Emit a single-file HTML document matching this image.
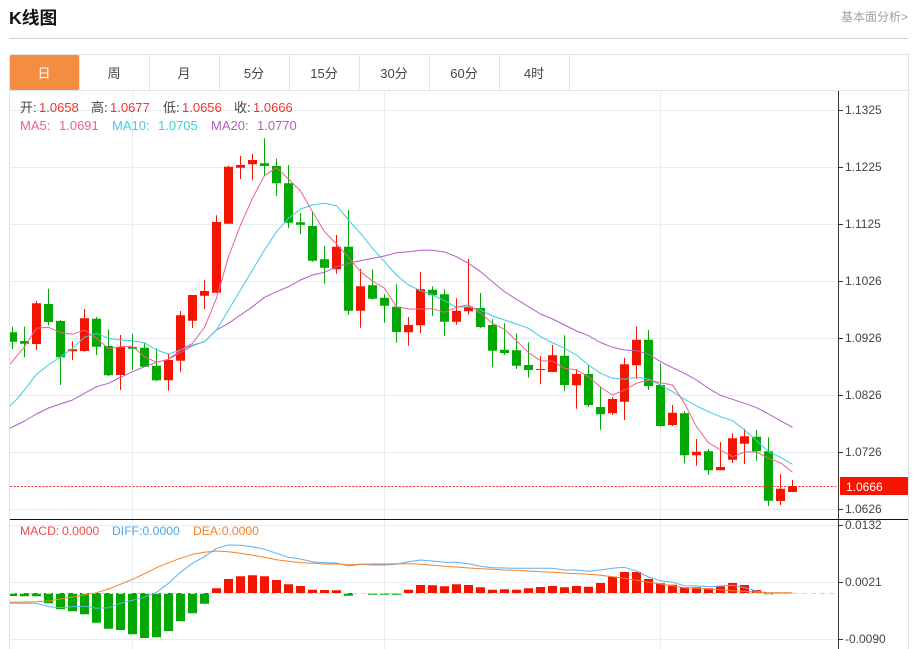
<!DOCTYPE html>
<html><head><meta charset="utf-8"><title>K线图</title>
<style>
html,body{margin:0;padding:0;background:#fff}
body{width:916px;height:649px;overflow:hidden;position:relative;font-family:"Liberation Sans","Noto Sans CJK SC",sans-serif}
svg{position:absolute;left:0;top:0}
svg text{font-family:"Liberation Sans","Noto Sans CJK SC",sans-serif}
</style></head><body>
<svg width="916" height="649" viewBox="0 0 916 649">
<defs><clipPath id="c"><rect x="10" y="91" width="828" height="558"/></clipPath></defs>
<text x="9" y="24" font-size="17.7" font-weight="700" fill="#111">K线图</text>
<text x="841" y="21" font-size="12" fill="#a0a0a0">基本面分析&gt;</text>
<path d="M9 38.5H908" stroke="#d0d0d0" fill="none"/>
<!-- frame and tabs -->
<path d="M9.5 649V54.5H908.5V649" stroke="#dfe4e8" fill="none"/>
<path d="M9.5 90.5H908.5M79.5 55V90M149.5 55V90M219.5 55V90M289.5 55V90M359.5 55V90M429.5 55V90M499.5 55V90M569.5 55V90" stroke="#dfe4e8" fill="none"/>
<rect x="10" y="55" width="69" height="35" rx="1.5" fill="#f48d42"/>
<g font-size="13" text-anchor="middle" fill="#444">
<text x="44" y="78" fill="#fff">日</text><text x="114" y="78">周</text><text x="184" y="78">月</text><text x="254" y="78">5分</text><text x="324" y="78">15分</text><text x="394" y="78">30分</text><text x="464" y="78">60分</text><text x="534" y="78">4时</text>
</g>
<!-- grid -->
<path d="M10 110.5H838M10 167.5H838M10 224.5H838M10 281.5H838M10 338.5H838M10 395.5H838M10 452.5H838M10 509.5H838M10 525.5H838M10 582.5H838M10 639.5H838M132.5 91V519M384.5 91V519M660.5 91V519M132.5 520V649M384.5 520V649M660.5 520V649" stroke="#e3edf3" fill="none"/>
<g clip-path="url(#c)" fill="none">
<!-- candles green -->
<path stroke="#03a803" d="M12.5 326.7V349M24.5 326.7V357.3M48.5 288.7V325.3M60.5 320V385M96.5 317V355M108.5 329.3V376M132.5 333.7V370M144.5 343.3V367.3M156.5 348.3V381M264.5 138.3V176M276.5 158.7V196M288.5 165V228M300.5 213V234M312.5 212V261.7M324.5 246V283.7M348.5 210V315M372.5 269.3V299.7M384.5 294.3V322.7M396.5 284.3V342.7M432.5 286.3V315.7M444.5 289.3V336M480.5 293V328M492.5 319V367.3M504.5 323.3V355M516.5 333.3V369M528.5 342.3V377.7M564.5 335.3V391.3M588.5 365V407M600.5 387.3V429.7M648.5 330V390M660.5 363.3V426.7M684.5 411.3V463.3M708.5 449V475M756.5 430V460.7M768.5 437.3V506"/>
<path stroke="#03a803" stroke-width="9" d="M12.5 332.3V341.7M24.5 341V343.7M48.5 304V322M60.5 321V357.3M96.5 318.7V346.7M108.5 346V375.3M132.5 347V348.7M144.5 347.7V366.7M156.5 365.7V380.3M264.5 163.3V166M276.5 166V183.3M288.5 183.3V222.7M300.5 222.3V224.9M312.5 226V260.7M324.5 259.3V267.7M348.5 246.7V310.7M372.5 285.3V298.7M384.5 297.7V305.7M396.5 306.7V332M432.5 289.7V295.3M444.5 294.3V321.7M480.5 308V327M492.5 325V350.7M504.5 349.7V353M516.5 350.3V365.7M528.5 365V370M564.5 355.7V385M588.5 374V405M600.5 407V414.3M648.5 339.7V386M660.5 385V426M684.5 413.3V455.3M708.5 451.3V470.3M756.5 436.7V451.3M768.5 451.3V500.7"/>
<!-- candles red -->
<path stroke="#f41500" d="M36.5 301V350M72.5 341.3V360M84.5 309V351.7M120.5 335V390M168.5 354V390.7M180.5 311V371.7M192.5 295V328M204.5 280V309M216.5 215.3V293.3M228.5 165.7V224M240.5 156V179M252.5 153.7V179.7M336.5 235V273.7M360.5 269V327.7M408.5 317V345.7M420.5 272V333M456.5 298.3V324.7M468.5 259V314.7M540.5 356.3V384.3M552.5 345V372M576.5 369V408.7M612.5 397.3V415M624.5 357.7V420M636.5 326.7V378.7M672.5 405V426M696.5 439V465.7M720.5 442V470.3M732.5 433.3V463M744.5 428.7V464M780.5 474V505M792.5 480V492"/>
<path stroke="#f41500" stroke-width="9" d="M36.5 303.3V344M72.5 349.3V351.3M84.5 318.3V351M120.5 347V375M168.5 360V380.3M180.5 315.3V360.7M192.5 295V320.7M204.5 291V295.7M216.5 222V292.7M228.5 166.7V223.7M240.5 165V167.7M252.5 160V164.3M336.5 246.7V269.3M360.5 286.3V310.7M408.5 325V332.3M420.5 289.3V325.3M456.5 310.7V321.7M468.5 306.7V311.3M540.5 369V370M552.5 355.3V372M576.5 374V385.3M612.5 399V413.3M624.5 364.3V401.7M636.5 339.7V365.3M672.5 412.7V425M696.5 451.7V455.3M720.5 467V470.3M732.5 438.3V459.7M744.5 436.3V443.7M780.5 488.7V501M792.5 486V492"/>
<!-- MA lines -->
<polyline stroke="#b25cc6" stroke-linejoin="round" points="10 428 12.5 427 24.5 421 36.5 414 48.5 408 60.5 404 72.5 400 84.5 393.3 96.5 386.7 108.5 383.3 120.5 377.3 132.5 371.7 144.5 366.7 156.5 362.3 168.5 359.3 180.5 352.7 192.5 345.7 204.5 341.7 216.5 330 228.5 323.3 240.5 315 252.5 306.7 264.5 297.3 276.5 291.7 288.5 286.7 300.5 280 312.5 275 324.5 272.3 336.5 266.7 348.5 263.3 360.5 260.7 372.5 258.3 384.5 256 396.5 252.7 408.5 251.7 420.5 250.3 432.5 250.3 444.5 252 456.5 256.7 468.5 263.3 480.5 271.7 492.5 281.7 504.5 291.7 516.5 299.3 528.5 306.7 540.5 314 552.5 319 564.5 325 576.5 331 588.5 335.7 600.5 342.5 612.5 347.3 624.5 350 636.5 350.7 648.5 354 660.5 361.7 672.5 367.7 684.5 373.3 696.5 380 708.5 388.3 720.5 395.3 732.5 399.3 744.5 403.3 756.5 407.7 768.5 414 780.5 420.7 792.5 427.3"/>
<polyline stroke="#3fcde2" stroke-linejoin="round" points="10 406 16 400 24.5 390 36.5 374.3 48.5 365 60.5 356.7 72.5 348.3 84.5 337.3 96.5 333.3 108.5 338.3 120.5 340 132.5 340.7 144.5 342.7 156.5 350 168.5 354 180.5 350 192.5 345 204.5 341.7 216.5 330 228.5 310 240.5 290 252.5 270 264.5 250 276.5 231.7 288.5 218.3 300.5 209 312.5 205 324.5 203.3 336.5 205.7 348.5 220 360.5 233.3 372.5 248.3 384.5 261.7 396.5 275 408.5 285 420.5 290.7 432.5 295 444.5 300.7 456.5 307.3 468.5 306.7 480.5 310 492.5 316 504.5 320 516.5 324 528.5 328.3 540.5 336.7 552.5 342.7 564.5 348.3 576.5 355 588.5 365 600.5 373.3 612.5 378.3 624.5 379.3 636.5 377.3 648.5 379 660.5 385 672.5 391.7 684.5 399.3 696.5 406 708.5 411.7 720.5 416.7 732.5 420.7 744.5 430 756.5 440.7 768.5 451.7 780.5 457.3 792.5 464.3"/>
<polyline stroke="#f0608f" stroke-linejoin="round" points="10 364.3 24.5 346.7 36.5 328.3 48.5 327.3 60.5 332.7 72.5 334.3 84.5 330 96.5 338.3 108.5 348.7 120.5 346.7 132.5 346.3 144.5 356.7 156.5 362.3 168.5 359.3 180.5 350 192.5 343.3 204.5 327.3 216.5 298.3 228.5 256.7 240.5 225 252.5 198.3 264.5 175.7 276.5 167.7 288.5 179 300.5 191 312.5 211.7 324.5 231.7 336.5 244 348.5 257.3 360.5 271.7 372.5 281 384.5 288.3 396.5 306.7 408.5 309 420.5 309 432.5 308.7 444.5 312.3 456.5 307.3 468.5 304.7 480.5 313.3 492.5 323.3 504.5 329.3 516.5 340.7 528.5 352.7 540.5 360.7 552.5 361.3 564.5 368.3 576.5 370 588.5 376.7 600.5 387 612.5 395 624.5 390 636.5 383.3 648.5 380 660.5 382.7 672.5 385 684.5 403.3 696.5 426.7 708.5 442.7 720.5 450 732.5 456.7 744.5 452 756.5 452 768.5 458.3 780.5 462.7 792.5 472.3"/>
<!-- MACD bars -->
<path stroke="#03a803" stroke-width="9" d="M12.5 593V596M24.5 593V596.3M36.5 593V596.3M48.5 593V603.3M60.5 593V609.3M72.5 593V611.3M84.5 593V614.3M96.5 593V622.7M108.5 593V628.7M120.5 593V630M132.5 593V634.3M144.5 593V638M156.5 593V637.3M168.5 593V631M180.5 593V621.3M192.5 593V613.3M204.5 593V603.7M348.5 593V595.7M372.5 593.5V594.7M384.5 593.5V594.7M396.5 593.5V594.7M768.5 593.3V594.3"/>
<path stroke="#f41500" stroke-width="9" d="M216.5 593V588.3M228.5 593V579M240.5 593V576.3M252.5 593V575.3M264.5 593V576.3M276.5 593V580M288.5 593V584.3M300.5 593V586M312.5 593V589.7M324.5 593V590M336.5 593V590.3M408.5 593V589.7M420.5 593V585M432.5 593V585.3M444.5 593V586.3M456.5 593V584.3M468.5 593V585M480.5 593V587.3M492.5 593V589.7M504.5 593V589.3M516.5 593V589.7M528.5 593V588.3M540.5 593V587M552.5 593V586M564.5 593V587.3M576.5 593V586M588.5 593V586.7M600.5 593V583M612.5 593V576.7M624.5 593V572M636.5 593V572M648.5 593V579M660.5 593V583.3M672.5 593V584.7M684.5 593V587.3M696.5 593V587.3M708.5 593V588.3M720.5 593V586.3M732.5 593V583M744.5 593V585M756.5 593V590"/>
<path d="M10 593.5H836" stroke="#b5dff0" stroke-dasharray="5 4"/>
<polyline stroke="#5fb0f2" stroke-linejoin="round" points="10 603.3 24.5 603.3 36.5 603.3 48.5 606.7 60.5 607.7 72.5 606.7 84.5 606.3 96.5 608.3 108.5 607.7 120.5 603.3 132.5 600.3 144.5 597.3 156.5 592.3 168.5 583.3 180.5 572.3 192.5 563.3 204.5 556.7 216.5 548.3 228.5 545 240.5 545.3 252.5 546.7 264.5 549.3 276.5 553.3 288.5 557.3 300.5 559 312.5 561.7 324.5 562.7 336.5 563 348.5 566 360.5 564.3 372.5 565 384.5 565 396.5 564.3 408.5 561.7 420.5 560 432.5 561 444.5 562.3 456.5 562.3 468.5 563.7 480.5 566.3 492.5 567.7 504.5 568 516.5 568.3 528.5 568.3 540.5 568.3 552.5 568.3 564.5 570 576.5 570 588.5 571.3 600.5 570 612.5 568.3 624.5 567.3 636.5 571 648.5 577 660.5 580.7 672.5 582.3 684.5 585.7 696.5 586 708.5 586.7 720.5 586 732.5 585.3 744.5 587.7 756.5 591 768.5 593 780.5 593 792.5 593"/>
<polyline stroke="#f5822a" stroke-linejoin="round" points="10 602.3 24.5 602 36.5 601.7 48.5 601 60.5 599 72.5 597 84.5 595 96.5 592.7 108.5 589 120.5 584.3 132.5 579.3 144.5 573.7 156.5 567.7 168.5 562.7 180.5 558.3 192.5 554.3 204.5 552.3 216.5 551 228.5 551.7 240.5 553.3 252.5 555.3 264.5 557.3 276.5 559.7 288.5 561.3 300.5 562.7 312.5 563.3 324.5 564 336.5 564 348.5 564.7 360.5 564.3 372.5 564 384.5 564 396.5 563.7 408.5 563.7 420.5 564.3 432.5 565.3 444.5 566.3 456.5 567 468.5 568 480.5 568.7 492.5 569.3 504.5 570 516.5 570.3 528.5 571 540.5 571.7 552.5 572.3 564.5 573 576.5 573.7 588.5 574.3 600.5 575.3 612.5 576.7 624.5 578.3 636.5 580.3 648.5 582.3 660.5 584 672.5 585.7 684.5 587.7 696.5 588.3 708.5 589 720.5 589.7 732.5 590.7 744.5 591.3 756.5 592.3 768.5 592.7 780.5 592.7 792.5 592.7"/>
</g>
<!-- current price line -->
<path d="M10 486.5H838" stroke="#f4342a" stroke-dasharray="2 1.6"/>
<!-- axis -->
<path d="M838.5 91V649M839 110.5H843M839 167.5H843M839 224.5H843M839 281.5H843M839 338.5H843M839 395.5H843M839 452.5H843M839 509.5H843M839 525.5H843M839 582.5H843M839 639.5H843" stroke="#333" fill="none"/>
<path d="M10 519.5H908" stroke="#111"/>
<rect x="840" y="477" width="68" height="18" fill="#f41500"/>
<g font-size="12" fill="#444">
<text x="845" y="114">1.1325</text><text x="845" y="171">1.1225</text><text x="845" y="228">1.1125</text><text x="845" y="285">1.1026</text><text x="845" y="342">1.0926</text><text x="845" y="399">1.0826</text><text x="845" y="456">1.0726</text><text x="845" y="513">1.0626</text>
<text x="845" y="529">0.0132</text><text x="845" y="586">0.0021</text><text x="845" y="643">-0.0090</text>
<text x="846" y="491" fill="#fff">1.0666</text>
</g>
<!-- legends -->
<g font-size="13">
<g fill="#444"><text x="20" y="112">开:</text><text x="91" y="112">高:</text><text x="163" y="112">低:</text><text x="234" y="112">收:</text></g>
<g fill="#f4342a"><text x="39" y="112">1.0658</text><text x="110" y="112">1.0677</text><text x="182" y="112">1.0656</text><text x="253" y="112">1.0666</text></g>
<g fill="#ef5f90"><text x="20" y="130">MA5:</text><text x="59" y="130">1.0691</text></g>
<g fill="#3fcde2"><text x="112" y="130">MA10:</text><text x="158" y="130">1.0705</text></g>
<g fill="#b25cc6"><text x="211" y="130">MA20:</text><text x="257" y="130">1.0770</text></g>
</g>
<g font-size="12.2">
<text x="20" y="535" fill="#f0494a">MACD:</text><text x="62" y="535" fill="#f0494a">0.0000</text>
<text x="112" y="535" fill="#4aa8f0">DIFF:</text><text x="142.5" y="535" fill="#4aa8f0">0.0000</text>
<text x="193" y="535" fill="#f5822a">DEA:</text><text x="221.7" y="535" fill="#f5822a">0.0000</text>
</g>
</svg>
</body></html>
